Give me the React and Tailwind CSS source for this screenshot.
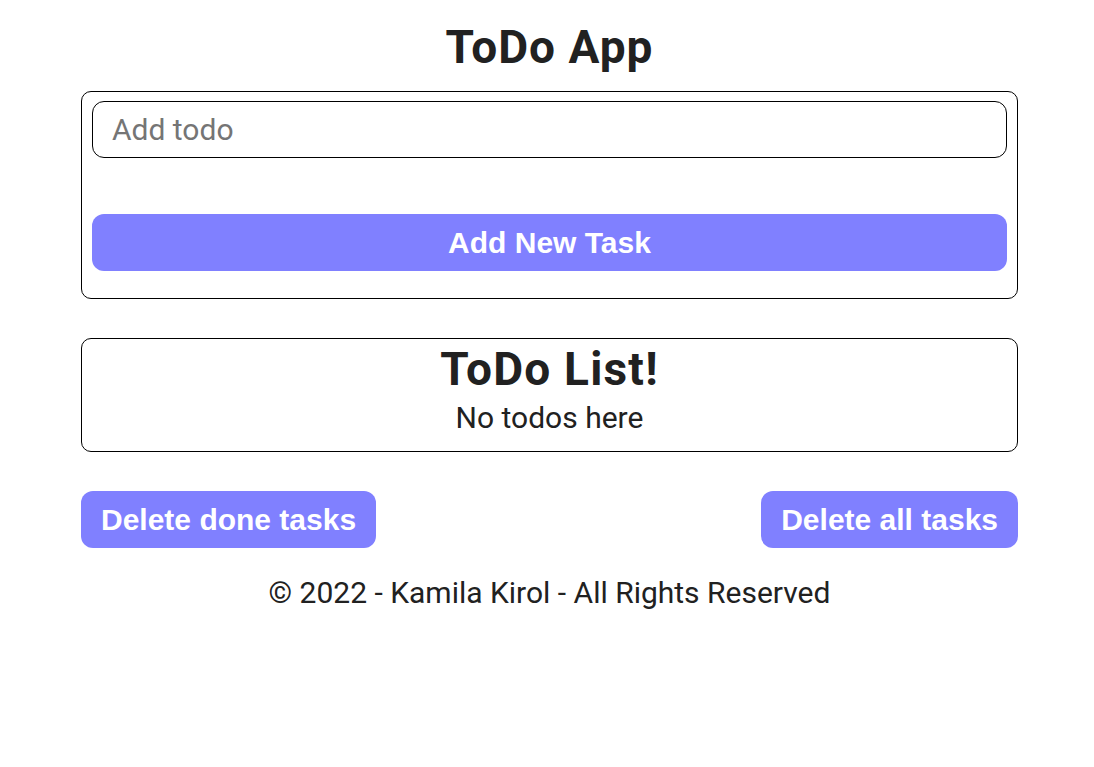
import React from 'react';

export default function App() {
  return (
    <div className="min-h-screen bg-white text-[#212121] font-['Roboto',sans-serif]">
      <div className="w-[937px] ml-[81px]">
        <h1 className="mt-[20px] mb-[17px] text-center text-[46px] leading-[54px] font-bold tracking-[1px]">
          ToDo App
        </h1>

        <div className="border border-black rounded-[10px] px-[10px] pt-[9px] pb-[27px]">
          <input
            type="text"
            placeholder="Add todo"
            className="w-full h-[57px] border border-black rounded-[12px] px-[19px] text-[30px] placeholder:text-[#757575] outline-none"
          />
          <button className="mt-[56px] w-full h-[57px] rounded-[12px] bg-[#8080ff] text-white text-[30px] font-bold font-['Liberation_Sans',Arial,sans-serif] flex items-center justify-center">
            Add New Task
          </button>
        </div>

        <div className="mt-[39px] border border-black rounded-[10px] pt-[4px] pb-[16px] text-center">
          <h2 className="text-[46px] leading-[53px] font-bold tracking-[1.2px]">ToDo List!</h2>
          <p className="mt-[4px] text-[30px] leading-[35px]">No todos here</p>
        </div>

        <div className="mt-[39px] flex justify-between">
          <button className="h-[57px] px-[20px] rounded-[12px] bg-[#8080ff] text-white text-[30px] font-bold font-['Liberation_Sans',Arial,sans-serif] flex items-center">
            Delete done tasks
          </button>
          <button className="h-[57px] px-[20px] rounded-[12px] bg-[#8080ff] text-white text-[30px] font-bold font-['Liberation_Sans',Arial,sans-serif] flex items-center">
            Delete all tasks
          </button>
        </div>

        <p className="mt-[27px] text-center text-[30px] leading-[35px]">
          © 2022 - Kamila Kirol - All Rights Reserved
        </p>
      </div>
    </div>
  );
}
